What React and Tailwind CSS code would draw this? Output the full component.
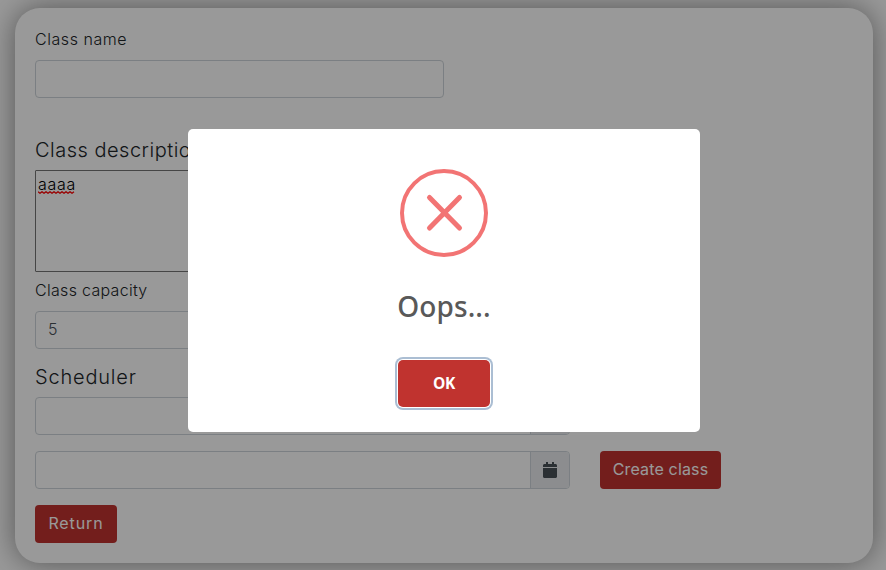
import React from "react";

const FIELD = "h-[38px] rounded border border-[#ced4da] bg-white";

function CalendarIcon() {
  return (
    <svg viewBox="0 0 448 512" className="h-4 w-3.5 fill-[#495057]">
      <path d="M12 192h424c6.600 0 12 5.400 12 12v260c0 26.500-21.500 48-48 48H48c-26.500 0-48-21.500-48-48V204c0-6.600 5.400-12 12-12zm436-44v-36c0-26.500-21.500-48-48-48h-48V12c0-6.600-5.400-12-12-12h-40c-6.600 0-12 5.400-12 12v52H160V12c0-6.600-5.400-12-12-12h-40c-6.600 0-12 5.400-12 12v52H48C21.500 64 0 85.500 0 112v36c0 6.600 5.400 12 12 12h424c6.600 0 12-5.400 12-12z" />
    </svg>
  );
}

function DateField() {
  return (
    <div className={`${FIELD} flex w-[535px] overflow-hidden`}>
      <div className="flex-1" />
      <div className="flex w-[39px] items-center justify-center border-l border-[#ced4da] bg-[#e9ecef]">
        <CalendarIcon />
      </div>
    </div>
  );
}

function SpellingMark() {
  return (
    <svg viewBox="0 0 38 3" className="absolute top-[19px] left-0 h-[3px] w-[38px]" fill="none" stroke="#f00" strokeWidth="1.2">
      <path d="M0 .7l2 1.600l2-1.600l2 1.600l2-1.600l2 1.600l2-1.600l2 1.600l2-1.600l2 1.600l2-1.600l2 1.600l2-1.600l2 1.600l2-1.600l2 1.600l2-1.600l2 1.600l2-1.600" />
    </svg>
  );
}

function ErrorDialog() {
  return (
    <div className="absolute inset-0 bg-black/40 pt-[129px] pl-[188px]">
      <div
        role="dialog"
        className="flex h-[303px] w-[512px] flex-col items-center rounded-[5px] bg-white pt-10 font-['Open_Sans','Noto_Sans',sans-serif]"
      >
        <svg viewBox="0 0 88 88" className="size-[88px] shrink-0" fill="none" stroke="#f27474">
          <circle cx="44" cy="44" r="42" strokeWidth="4" />
          <path d="M29.500 28.500l30 30.500M59.500 28.500l-30 30.500" strokeWidth="5" strokeLinecap="round" />
        </svg>
        <h2 className="mt-[29px] h-10 font-['Noto_Sans',sans-serif] text-[28px] leading-10 font-medium tracking-[0.1px] whitespace-nowrap text-[#595959]">Oops...</h2>
        <button className="mt-[34px] h-[47px] w-[92px] rounded-[5px] bg-[#c0332f] pt-px text-[15.5px] font-bold tracking-[-0.3px] text-white shadow-[0_0_0_1px_#fff,0_0_0_3px_#abbed3]">
          OK
        </button>
      </div>
    </div>
  );
}

export default function App() {
  return (
    <div className="relative h-[570px] w-[886px] overflow-hidden bg-white pt-2 pl-[15px] font-['Inter',sans-serif] text-base font-light text-[#212529]">
      <main className="flex h-[555px] w-[858px] flex-col items-start rounded-[25px] bg-white px-5 pt-[19px] shadow-[0_0_30px_rgba(0,0,0,0.45)]">
        <label className="h-6 leading-6 tracking-[0.55px]">Class name</label>
        <div className={`${FIELD} mt-[9px] w-[409px]`} />
        <h5 className="mt-10 h-6 text-xl leading-6 tracking-[0.5px]">Class description</h5>
        <div className="mt-2 h-[102px] w-[409px] rounded-[1px] border border-[#767676] px-0.5 pt-px text-black">
          <span className="relative block w-fit leading-6 tracking-[0.7px]">
            aaaa
            <SpellingMark />
          </span>
        </div>
        <label className="mt-1.5 h-6 leading-6 tracking-[0.3px]">Class capacity</label>
        <div className={`${FIELD} mt-[9px] w-[409px] px-3 leading-[35px] text-[#495057]`}>5</div>
        <h5 className="mt-4 h-6 text-xl leading-6 tracking-[0.8px]">Scheduler</h5>
        <div className="mt-2">
          <DateField />
        </div>
        <div className="mt-4 flex gap-[30px]">
          <DateField />
          <button className="h-[38px] w-[121px] rounded bg-[#c0332f] pb-0.5 font-normal tracking-[0.15px] whitespace-nowrap text-white">Create class</button>
        </div>
        <button className="mt-4 h-[38px] w-[82px] rounded bg-[#c0332f] pb-0.5 font-normal tracking-[0.9px] text-white">Return</button>
      </main>
      <ErrorDialog />
    </div>
  );
}
